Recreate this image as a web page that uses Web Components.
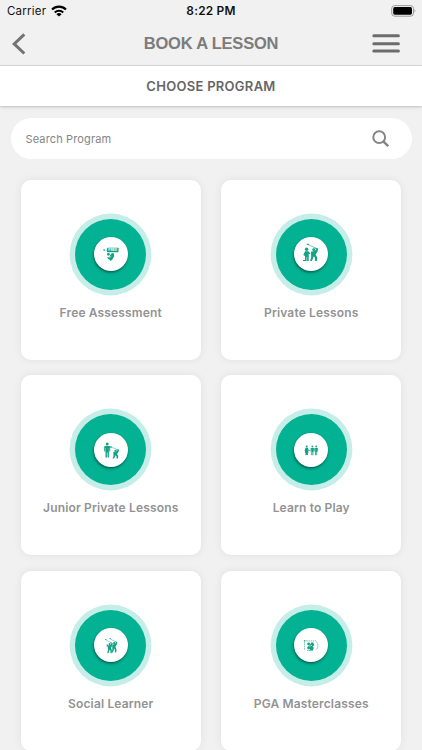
<!DOCTYPE html>
<html lang="en">
<head>
<meta charset="utf-8">
<title>Book a Lesson</title>
<style>
html,body{margin:0;height:750px;overflow:hidden;background:#f1f1f1}
body{font-family:Inter,"Liberation Sans",sans-serif}
</style>
</head>
<body>
<lesson-app></lesson-app>
<script>
const define = (name, html) => customElements.define(name, class extends HTMLElement {
  constructor() {
    super();
    this.attachShadow({mode: 'open'}).innerHTML = typeof html === 'function' ? html(this) : html;
  }
});

define('status-bar', `<style>
:host{display:grid;grid-template-columns:1fr auto 1fr;height:22px;align-items:center;font-size:11.5px;color:#111;padding:0 7px}
.l{display:flex;align-items:center;gap:5px;letter-spacing:.22px}
b{font-weight:600;font-size:11.9px;line-height:14px;padding-bottom:1px;letter-spacing:.22px}
.r{justify-self:end;display:flex;margin-right:-2px}
svg{display:block}
</style>
<span class="l"><span>Carrier</span><svg width="16" height="12" viewBox="0 0 16 12" fill="none" stroke="#000" stroke-width="2.1"><path d="M1 4.5a10 10 0 0 1 14 0M3.8 7.4a6 6 0 0 1 8.4 0"/><path d="M8 11.6L5.4 9.2a3.7 3.7 0 0 1 5.2 0z" fill="#000" stroke="none"/></svg></span>
<b>8:22 PM</b>
<span class="r"><svg width="26" height="12" viewBox="0 0 26 12"><rect x=".7" y=".6" width="21.8" height="10.6" rx="3" fill="none" stroke="#999" stroke-width="1"/><rect x="2.2" y="2.1" width="18.8" height="7.6" rx="1.6"/><path d="M23.7 4.1q1.5 1.8 0 3.6z" fill="#888"/></svg></span>`);

define('nav-bar', `<style>
:host{display:grid;grid-template-columns:60px 1fr 60px;height:43px;align-items:center;border-bottom:1px solid #d8d8d8}
h1{margin:0 0 1px;text-align:center;font-family:"Liberation Sans",Arial,sans-serif;font-size:16.5px;line-height:20px;font-weight:700;color:#7c7c7c;letter-spacing:-.2px}
svg{display:block}
.m{justify-self:end;margin-right:22px}
.b{margin-left:11px}
</style>
<svg class="b" width="16" height="22" viewBox="0 0 16 22" fill="none" stroke="#747474" stroke-width="3"><path d="M13.3 1.3L3.2 10.9l10.1 9.6"/></svg>
<h1><slot></slot></h1>
<svg class="m" width="28" height="20" viewBox="0 0 28 20" stroke="#6c6c6c" stroke-width="3" stroke-linecap="round"><path d="M1.8 1.7h24.6M1.8 9.8h24.6M1.8 17h24.6"/></svg>`);

define('section-title', `<style>
:host{display:flex;height:40px;align-items:center;justify-content:center;background:#fff;box-shadow:0 1px 2px #0000002b,0 2px 6px #0000000d;font-size:13px;font-weight:600;color:#666;letter-spacing:.28px}
</style><h2 style="font:inherit;margin:0"><slot></slot></h2>`);

define('search-field', `<style>
:host{display:flex;height:41px;margin:12px 10.5px 0;padding:0 22.5px 0 15px;box-sizing:border-box;align-items:center;justify-content:space-between;background:#fff;border-radius:21px;font-size:11px;color:#858585;letter-spacing:.14px}
</style><span><slot></slot></span>
<svg width="17" height="17" viewBox="0 0 17 17" fill="none" stroke="#858585" stroke-width="2"><circle cx="7.2" cy="7.2" r="5.9"/><path d="M11.3 11.3l4.9 4.9" stroke-width="2.4"/></svg>`);

const man = '<circle cx="3" cy="1.5" r="1.5"/><path d="M1 3.5h4q1 0 1 1V9H5V5.5h-.3V15h-1.4v-5h-.6v5H1.3V5.5H1V9H0V4.5q0-1 1-1z"/>';
const golfer = '<circle cx="4" cy="4" r="1.5"/><path d="M1.2 6L5 5.2l1.8-2-2-.8.3-.9 3.6 1.2-.9 3.4L5.9 9l1.6 3L7.2 16H5.4l-.2-3.4-1.2-1.6L3.4 13 2.1 16H.3l1.1-4z"/><path d="M6 2.2L-2 -1.6" stroke="currentColor" stroke-width=".6" fill="none"/><path d="M-3-2.4h2v1.2h-2z"/>';
const icons = {
  free: '<rect x="13" y="10.8" width="11.5" height="4.5" rx=".4"/><text x="18.8" y="14.4" text-anchor="middle" font-size="3.6" font-weight="800" fill="#e8faf5">FREE</text><path d="M9.2 12.4l1.8.2v1.2l-1.8-.3zM11.6 12.7h1v.9h-1z"/><circle cx="14.4" cy="17.3" r="1.4"/><path d="M16 18.3l2-2.2 1.9.5.4 2.5-2 3.5-1.5 1.3-1.4-1.3-1.4-.5-.8-2 2.3.5z"/><path d="M15.4 20.5l2-1.4" stroke="#fff" stroke-width=".5"/>',
  private: `<circle cx="12.6" cy="12.3" r="1.7"/><path d="M11 14.2h3.3l2.2 2.2-.8.9-1-.8V24h-1.6v-4h-.5v4H11v-5l-1.7-1z"/><path d="M9 23h3v1H9z"/><g transform="translate(15.8 9) scale(.98 .94)">${golfer}</g>`,
  junior: `<g transform="translate(10.2 9.4)">${man}</g><g transform="translate(18.4 15) scale(.78 .66)">${golfer}</g><path d="M16 13.9l2 .6" stroke="currentColor" stroke-width=".6"/>`,
  learn: `<g transform="translate(16.6 12.6) scale(.59 .65)">${man}</g><g transform="translate(20.4 12.6) scale(.59 .65)">${man}</g><circle cx="12.7" cy="13.6" r="1"/><path d="M11.5 14.8h2.4l1 3-.7.2.4 1.8h-.7V22h-2.4v-2.2h-.7l.4-1.8-.7-.2z"/><path d="M15.1 17.2l1.2.9" stroke="currentColor" stroke-width=".7"/>`,
  social: `<g transform="translate(13 13) scale(.66 .77)">${golfer}</g><g transform="translate(17.4 12) scale(.68 .78)">${golfer}</g><path d="M12.7 16.5h1.5v2h-1.5z"/>`,
  pga: '<path d="M10.6 13.3v8.8M12.2 12.9h8M21 12.6a5.6 5.6 0 0 1 .7 9.4M13 22.5h6" fill="none" stroke="currentColor" stroke-width=".6" stroke-dasharray="1.6 .6"/><circle cx="14.6" cy="16" r="1.4"/><path d="M15.5 17.5l1.8-3.1 2 .2 1 2.6-1.8 1.2 1.4 1.4-1 2.2-2.3.6-1.2-1.5-1.6.4-.7-2.2z"/><path d="M15.5 18.6l2.5-1.5" stroke="#fff" stroke-width=".6"/><path d="M9.8 12.2h1.7v1H9.8z"/>'
};

define('program-icon', el => `<style>
:host{display:grid;place-items:center;width:71px;height:71px;margin:5px;border-radius:50%;background:#03b193;box-shadow:0 0 0 5.4px #c6ede7;color:#13a384}
.d{width:34px;height:34px;border-radius:50%;background:#fff;box-shadow:-.5px 1.5px 2.5px #003d30b0}
svg{display:block;width:34px;height:34px;font-family:Inter,sans-serif}
</style><div class="d"><svg viewBox="0 0 34 34" fill="currentColor">${icons[el.getAttribute('name')]}</svg></div>`);

define('program-card', el => `<style>
:host{display:flex;flex-direction:column;align-items:center;box-sizing:border-box;height:180px;padding-top:34px;background:#fff;border-radius:10px;box-shadow:0 0 9px #00000012}
p{margin:9.2px 0 0;font-size:12px;line-height:18px;font-weight:600;color:#939393;letter-spacing:.15px;white-space:nowrap}
</style><program-icon name="${el.getAttribute('icon')}"></program-icon><p><slot></slot></p>`);

define('program-grid', `<style>
:host{display:grid;grid-template-columns:180px 180px;column-gap:20.5px;row-gap:15.5px;padding:20.8px 0 0 20.75px}
</style><slot></slot>`);

define('lesson-app', `<style>:host{display:block;width:422px;height:750px;overflow:hidden;background:#f1f1f1}</style>
<status-bar></status-bar>
<nav-bar>BOOK A LESSON</nav-bar>
<section-title>CHOOSE PROGRAM</section-title>
<search-field>Search Program</search-field>
<program-grid>
<program-card icon="free">Free Assessment</program-card>
<program-card icon="private">Private Lessons</program-card>
<program-card icon="junior">Junior Private Lessons</program-card>
<program-card icon="learn">Learn to Play</program-card>
<program-card icon="social">Social Learner</program-card>
<program-card icon="pga">PGA Masterclasses</program-card>
</program-grid>`);
</script>
</body>
</html>
